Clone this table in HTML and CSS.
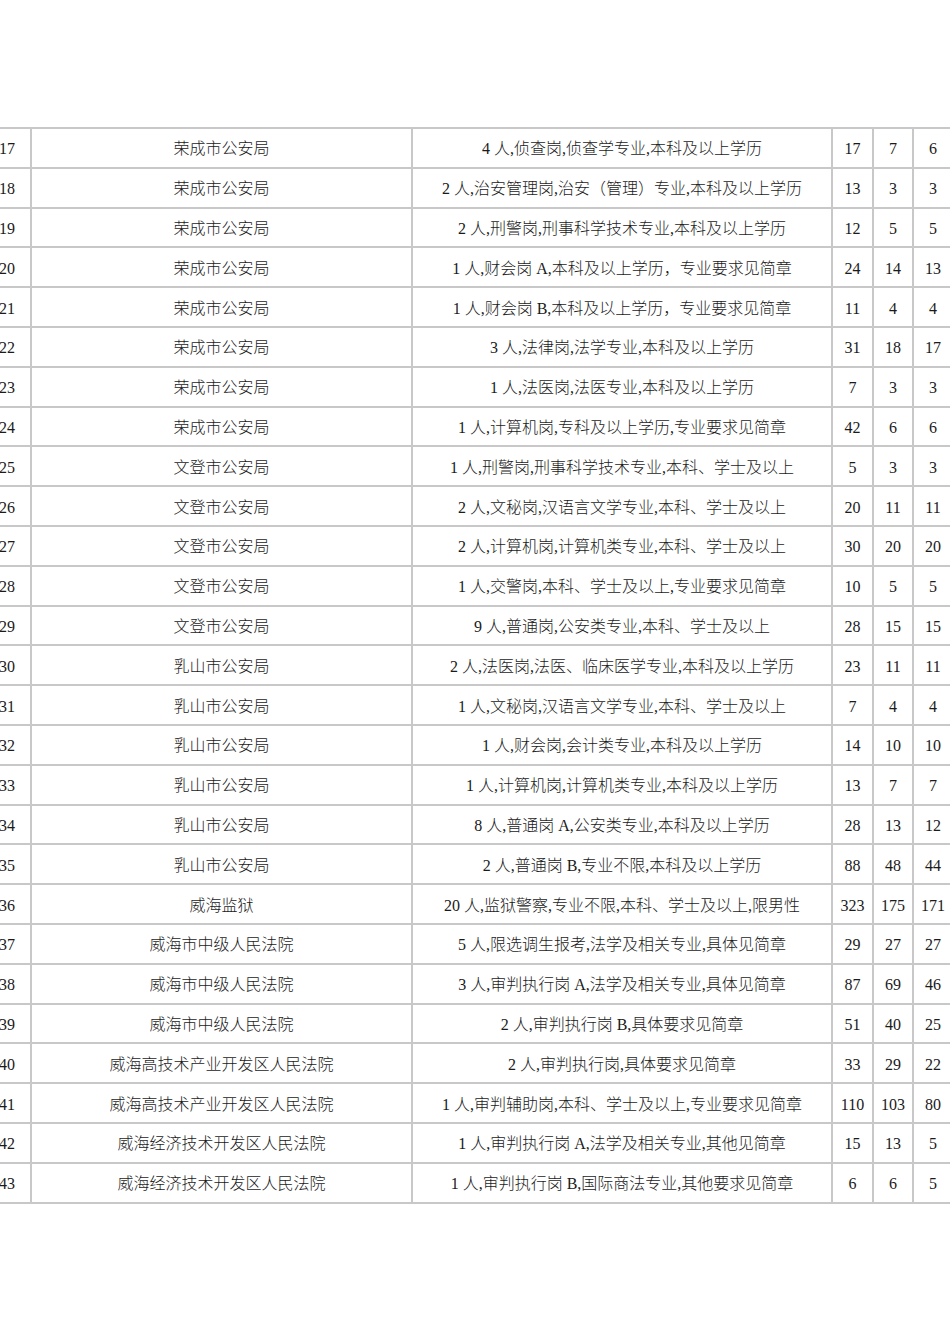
FILE: index.html
```html
<!DOCTYPE html>
<html lang="zh">
<head>
<meta charset="utf-8">
<title>招录统计表</title>
<link rel="stylesheet" href="styles.css">
</head>
<body>
<table class="grid">
<colgroup>
<col class="c-no"><col class="c-unit"><col class="c-post"><col class="c-n1"><col class="c-n2"><col class="c-n3">
</colgroup>
<tbody>
<tr><td>17</td><td>荣成市公安局</td><td>4 人,侦查岗,侦查学专业,本科及以上学历</td><td>17</td><td>7</td><td>6</td></tr>
<tr><td>18</td><td>荣成市公安局</td><td>2 人,治安管理岗,治安（管理）专业,本科及以上学历</td><td>13</td><td>3</td><td>3</td></tr>
<tr><td>19</td><td>荣成市公安局</td><td>2 人,刑警岗,刑事科学技术专业,本科及以上学历</td><td>12</td><td>5</td><td>5</td></tr>
<tr><td>20</td><td>荣成市公安局</td><td>1 人,财会岗 A,本科及以上学历，专业要求见简章</td><td>24</td><td>14</td><td>13</td></tr>
<tr><td>21</td><td>荣成市公安局</td><td>1 人,财会岗 B,本科及以上学历，专业要求见简章</td><td>11</td><td>4</td><td>4</td></tr>
<tr><td>22</td><td>荣成市公安局</td><td>3 人,法律岗,法学专业,本科及以上学历</td><td>31</td><td>18</td><td>17</td></tr>
<tr><td>23</td><td>荣成市公安局</td><td>1 人,法医岗,法医专业,本科及以上学历</td><td>7</td><td>3</td><td>3</td></tr>
<tr><td>24</td><td>荣成市公安局</td><td>1 人,计算机岗,专科及以上学历,专业要求见简章</td><td>42</td><td>6</td><td>6</td></tr>
<tr><td>25</td><td>文登市公安局</td><td>1 人,刑警岗,刑事科学技术专业,本科、学士及以上</td><td>5</td><td>3</td><td>3</td></tr>
<tr><td>26</td><td>文登市公安局</td><td>2 人,文秘岗,汉语言文学专业,本科、学士及以上</td><td>20</td><td>11</td><td>11</td></tr>
<tr><td>27</td><td>文登市公安局</td><td>2 人,计算机岗,计算机类专业,本科、学士及以上</td><td>30</td><td>20</td><td>20</td></tr>
<tr><td>28</td><td>文登市公安局</td><td>1 人,交警岗,本科、学士及以上,专业要求见简章</td><td>10</td><td>5</td><td>5</td></tr>
<tr><td>29</td><td>文登市公安局</td><td>9 人,普通岗,公安类专业,本科、学士及以上</td><td>28</td><td>15</td><td>15</td></tr>
<tr><td>30</td><td>乳山市公安局</td><td>2 人,法医岗,法医、临床医学专业,本科及以上学历</td><td>23</td><td>11</td><td>11</td></tr>
<tr><td>31</td><td>乳山市公安局</td><td>1 人,文秘岗,汉语言文学专业,本科、学士及以上</td><td>7</td><td>4</td><td>4</td></tr>
<tr><td>32</td><td>乳山市公安局</td><td>1 人,财会岗,会计类专业,本科及以上学历</td><td>14</td><td>10</td><td>10</td></tr>
<tr><td>33</td><td>乳山市公安局</td><td>1 人,计算机岗,计算机类专业,本科及以上学历</td><td>13</td><td>7</td><td>7</td></tr>
<tr><td>34</td><td>乳山市公安局</td><td>8 人,普通岗 A,公安类专业,本科及以上学历</td><td>28</td><td>13</td><td>12</td></tr>
<tr><td>35</td><td>乳山市公安局</td><td>2 人,普通岗 B,专业不限,本科及以上学历</td><td>88</td><td>48</td><td>44</td></tr>
<tr><td>36</td><td>威海监狱</td><td>20 人,监狱警察,专业不限,本科、学士及以上,限男性</td><td>323</td><td>175</td><td>171</td></tr>
<tr><td>37</td><td>威海市中级人民法院</td><td>5 人,限选调生报考,法学及相关专业,具体见简章</td><td>29</td><td>27</td><td>27</td></tr>
<tr><td>38</td><td>威海市中级人民法院</td><td>3 人,审判执行岗 A,法学及相关专业,具体见简章</td><td>87</td><td>69</td><td>46</td></tr>
<tr><td>39</td><td>威海市中级人民法院</td><td>2 人,审判执行岗 B,具体要求见简章</td><td>51</td><td>40</td><td>25</td></tr>
<tr><td>40</td><td>威海高技术产业开发区人民法院</td><td>2 人,审判执行岗,具体要求见简章</td><td>33</td><td>29</td><td>22</td></tr>
<tr><td>41</td><td>威海高技术产业开发区人民法院</td><td>1 人,审判辅助岗,本科、学士及以上,专业要求见简章</td><td>110</td><td>103</td><td>80</td></tr>
<tr><td>42</td><td>威海经济技术开发区人民法院</td><td>1 人,审判执行岗 A,法学及相关专业,其他见简章</td><td>15</td><td>13</td><td>5</td></tr>
<tr><td>43</td><td>威海经济技术开发区人民法院</td><td>1 人,审判执行岗 B,国际商法专业,其他要求见简章</td><td>6</td><td>6</td><td>5</td></tr>
</tbody>
</table>
</body>
</html>
```
FILE: styles.css
```css
html, body {
  margin: 0;
  padding: 0;
  overflow: hidden;
  background: #ffffff;
}

body {
  width: 950px;
  height: 1344px;
  font-family: "Liberation Serif", "Noto Sans CJK SC", serif;
  font-size: 16px;
  font-weight: 300;
  color: #1a1a1a;
}

.grid {
  table-layout: fixed;
  border-collapse: separate;
  border-spacing: 0;
  border: 1px solid #c8c8c8;
  width: 970px;
  margin-top: 127px;
  margin-left: -18px;
}

.c-no { width: 48px; }
.c-unit { width: 381px; }
.c-post { width: 420px; }
.c-n1 { width: 41px; }
.c-n2 { width: 40px; }
.c-n3 { width: 40px; }

.grid td {
  box-sizing: border-box;
  height: 39.8px;
  padding: 3px 0 0;
  border: 1px solid #c8c8c8;
  text-align: center;
  vertical-align: middle;
  white-space: nowrap;
  line-height: 20px;
}
```
